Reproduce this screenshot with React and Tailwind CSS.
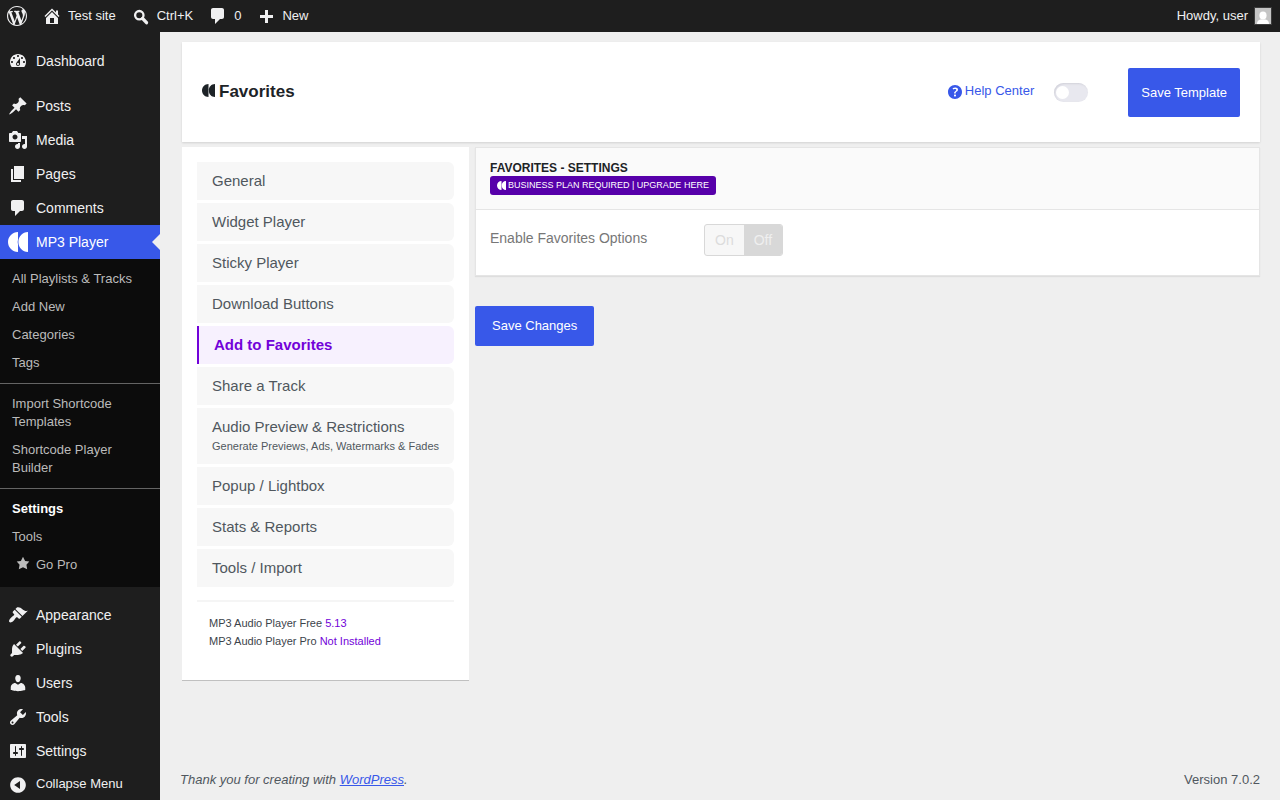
import React, { useState } from 'react';
import clsx from 'clsx';

const icons = {
  wordpress: 'M20 10c0-5.51-4.49-10-10-10C4.48 0 0 4.49 0 10c0 5.52 4.48 10 10 10 5.51 0 10-4.48 10-10zM7.78 15.37L4.37 6.22c.55-.02 1.17-.08 1.17-.08.5-.06.44-1.13-.06-1.11 0 0-1.45.11-2.37.11-.18 0-.37 0-.58-.01C4.12 2.69 6.87 1.11 10 1.11c2.33 0 4.45.87 6.05 2.34-.68-.11-1.65.39-1.65 1.58 0 .74.45 1.36.9 2.1.35.61.55 1.36.55 2.46 0 1.49-1.4 5-1.4 5l-3.03-8.37c.54-.02.82-.17.82-.17.5-.05.44-1.25-.06-1.22 0 0-1.44.12-2.38.12-.87 0-2.33-.12-2.33-.12-.5-.03-.56 1.2-.06 1.22l.92.08 1.26 3.41zM17.41 10c.24-.64.74-1.87.43-4.25.7 1.29 1.05 2.71 1.05 4.25 0 3.29-1.73 6.24-4.4 7.78.97-2.59 1.94-5.2 2.92-7.78zM6.1 18.09C3.12 16.65 1.11 13.53 1.11 10c0-1.3.23-2.48.72-3.59C3.25 10.3 4.67 14.2 6.1 18.09zm4.03-6.63l2.58 6.98c-.86.29-1.76.45-2.71.45-.79 0-1.57-.11-2.29-.33.81-2.38 1.62-4.74 2.42-7.1z',
  home: 'M16 8.5l1.53 1.53-1.06 1.06L10 4.6l-6.47 6.49-1.06-1.06L10 2.5l4 4v-2h2v4zm-6-2.46l6 5.99V18H4v-5.97zM12 17v-5H8v5h4z',
  plus: 'M17 9v3h-5v5H9v-5H4V9h5V4h3v5z',
  dashboard: 'M3.76 16h12.48c1.1-1.37 1.76-3.11 1.76-5 0-4.42-3.58-8-8-8s-8 3.58-8 8c0 1.89.66 3.63 1.76 5zM10 4c.55 0 1 .45 1 1s-.45 1-1 1-1-.45-1-1 .45-1 1-1zM6 6c.55 0 1 .45 1 1s-.45 1-1 1-1-.45-1-1 .45-1 1-1zm8 0c.55 0 1 .45 1 1s-.45 1-1 1-1-.45-1-1 .45-1 1-1zm-5.37 5.55L12 7v6c0 1.1-.9 2-2 2s-2-.9-2-2c0-.57.24-1.08.63-1.45zM4 10c.55 0 1 .45 1 1s-.45 1-1 1-1-.45-1-1 .45-1 1-1zm12 0c.55 0 1 .45 1 1s-.45 1-1 1-1-.45-1-1 .45-1 1-1zm-5 3c0-.55-.45-1-1-1s-1 .45-1 1 .45 1 1 1 1-.45 1-1z',
  post: 'M10.44 3.02l1.82-1.82 6.36 6.35-1.83 1.82c-1.05-.68-2.48-.57-3.41.36l-.75.75c-.92.93-1.04 2.35-.35 3.41l-1.83 1.82-2.41-2.41-2.8 2.79c-.42.42-3.38 2.71-3.8 2.29s1.86-3.39 2.28-3.81l2.79-2.79L4.1 9.36l1.83-1.82c1.05.69 2.48.57 3.4-.36l.75-.75c.93-.92 1.05-2.35.36-3.41z',
  media: 'M13 11V4c0-.55-.45-1-1-1h-1.67L9 1H5L3.67 3H2c-.55 0-1 .45-1 1v7c0 .55.45 1 1 1h10c.55 0 1-.45 1-1zM7 4.5c1.38 0 2.5 1.12 2.5 2.5S8.38 9.5 7 9.5 4.5 8.38 4.5 7 5.62 4.5 7 4.5zM14 6h5v10.5c0 1.38-1.12 2.5-2.5 2.5S14 17.88 14 16.5s1.12-2.5 2.5-2.5c.17 0 .34.02.5.05V9h-3V6zm-4 8.05V13h2v3.5c0 1.38-1.12 2.5-2.5 2.5S7 17.88 7 16.5 8.12 14 9.5 14c.17 0 .34.02.5.05z',
  page: 'M6 15V2h10v13H6zm-1 1h8v2H3V5h2v11z',
  comments: 'M5 2h9c1.1 0 2 .9 2 2v7c0 1.1-.9 2-2 2h-2l-5 5v-5H5c-1.1 0-2-.9-2-2V4c0-1.1.9-2 2-2z',
  appearance: 'M14.48 11.06L7.41 3.99l1.5-1.5c.5-.56 2.3-.47 3.51.32 1.21.8 1.43 1.28 2.91 2.1 1.18.64 2.45 1.26 4.45.85zm-.71.71L6.7 4.7 4.93 6.47c-.39.39-.39 1.02 0 1.41l1.06 1.06c.39.39.39 1.03 0 1.42-.6.6-1.43 1.11-2.21 1.69-.35.26-.7.53-1.01.84C1.43 14.23.4 16.08 1.4 17.07c.99 1 2.84-.03 4.18-1.36.31-.31.58-.66.85-1.02.57-.78 1.08-1.61 1.69-2.21.39-.39 1.02-.39 1.41 0l1.06 1.06c.39.39 1.02.39 1.41 0z',
  plugins: 'M13.11 4.36L9.87 7.6 8 5.73l3.24-3.24c.35-.34 1.05-.2 1.56.32.52.51.66 1.21.31 1.55zm-8 1.77l.91-1.12 9.01 9.01-1.19.84c-.71.71-2.63 1.16-3.82 1.16H6.14L4.9 17.26c-.59.59-1.54.59-2.12 0-.59-.58-.59-1.53 0-2.12l1.24-1.24v-3.88c0-1.13.4-3.19 1.09-3.89zm7.26 3.97l3.24-3.24c.34-.35 1.04-.21 1.55.31.52.51.66 1.21.31 1.55l-3.24 3.25z',
  users: 'M10 9.25c-2.27 0-2.73-3.44-2.73-3.44C7 4.02 7.82 2 9.97 2c2.16 0 2.98 2.02 2.71 3.81 0 0-.41 3.44-2.68 3.44zm0 2.57L12.72 10c2.39 0 4.52 2.33 4.52 4.53v2.49s-3.65 1.13-7.24 1.13c-3.65 0-7.24-1.13-7.24-1.13v-2.49c0-2.25 1.94-4.48 4.47-4.48z',
  tools: 'M16.68 9.77c-1.34 1.34-3.3 1.67-4.95.99l-5.41 6.52c-.99.99-2.59.99-3.58 0s-.99-2.59 0-3.57l6.52-5.42c-.68-1.65-.35-3.61.99-4.95 1.28-1.28 3.12-1.62 4.72-1.06l-2.89 2.89 2.82 2.82 2.86-2.87c.53 1.58.18 3.39-1.08 4.65zM3.81 16.21c.4.39 1.04.39 1.43 0 .4-.4.4-1.04 0-1.43-.39-.4-1.03-.4-1.43 0-.39.39-.39 1.03 0 1.43z',
  settings: 'M18 16V4c0-.55-.45-1-1-1H3c-.55 0-1 .45-1 1v12c0 .55.45 1 1 1h14c.55 0 1-.45 1-1zM8 11h1c.55 0 1 .45 1 1s-.45 1-1 1H8v1.5c0 .28-.22.5-.5.5s-.5-.22-.5-.5V13H6c-.55 0-1-.45-1-1s.45-1 1-1h1V5.5c0-.28.22-.5.5-.5s.5.22.5.5V11zm5-2h-1c-.55 0-1-.45-1-1s.45-1 1-1h1V5.5c0-.28.22-.5.5-.5s.5.22.5.5V7h1c.55 0 1 .45 1 1s-.45 1-1 1h-1v5.5c0 .28-.22.5-.5.5s-.5-.22-.5-.5V9z',
  collapse: 'M10 3.16c4.33 0 7.84 3.51 7.84 7.84s-3.51 7.84-7.84 7.84S2.16 15.33 2.16 11 5.71 3.16 10 3.16zm2 11.72V7.12L6.18 10.97z',
  star: 'M10 1l3 6 6 .75-4.12 4.62L16 19l-6-3-6 3 1.13-6.63L1 7.75 7 7z',
  help: 'M17 10c0-3.87-3.14-7-7-7-3.87 0-7 3.13-7 7s3.13 7 7 7c3.86 0 7-3.13 7-7zm-6.3 1.48H9.14v-.43c0-.38.08-.7.24-.98s.46-.57.88-.89c.41-.29.68-.53.81-.71.14-.18.2-.39.2-.62 0-.25-.09-.44-.28-.58-.19-.13-.45-.19-.79-.19-.58 0-1.25.15-2 .46l-.64-1.28c.87-.49 1.8-.74 2.77-.74.81 0 1.45.2 1.92.58.48.39.71.91.71 1.55 0 .43-.09.8-.29 1.11-.19.32-.57.67-1.11 1.06-.38.28-.61.49-.71.63-.1.15-.15.34-.15.57v.46zm-1.47 2.74c-.18-.17-.27-.42-.27-.73 0-.33.08-.58.26-.75s.43-.25.77-.25c.32 0 .57.09.75.26s.27.42.27.74c0 .3-.09.55-.27.72-.18.18-.43.27-.75.27-.33 0-.58-.09-.76-.26z',
  sonaar: 'M10 0v7.500Q9.300 10 10 12.500V20C4.500 20 0 15.500 0 10S4.500 0 10 0zM20 0v20c-5.500 0-9.600-4.500-9.600-10S14.500 0 20 0z',
};

const Icon = ({ name, className = 'w-5 h-5' }) => (
  <svg viewBox="0 0 20 20" fill="currentColor" aria-hidden="true" className={clsx('shrink-0', className)}>
    <path d={icons[name]} />
  </svg>
);

const SearchIcon = () => (
  <svg viewBox="0 0 20 20" fill="none" stroke="currentColor" aria-hidden="true" className="h-5 w-5 shrink-0">
    <circle cx="8.300" cy="9.200" r="4.200" strokeWidth="2.300" />
    <path d="M11.500 12.400l4 4.300" strokeWidth="3.300" strokeLinecap="round" />
  </svg>
);

const topMenu = [
  { icon: 'post', label: 'Posts' },
  { icon: 'media', label: 'Media' },
  { icon: 'page', label: 'Pages' },
  { icon: 'comments', label: 'Comments' },
];

const bottomMenu = [
  { icon: 'appearance', label: 'Appearance' },
  { icon: 'plugins', label: 'Plugins' },
  { icon: 'users', label: 'Users' },
  { icon: 'tools', label: 'Tools' },
  { icon: 'settings', label: 'Settings' },
];

// Groups are split by a thin rule
const submenu = [
  ['All Playlists & Tracks', 'Add New', 'Categories', 'Tags'],
  ['Import Shortcode Templates', 'Shortcode Player Builder'],
  ['Settings', 'Tools', 'Go Pro'],
];

const tabs = [
  { label: 'General' },
  { label: 'Widget Player' },
  { label: 'Sticky Player' },
  { label: 'Download Buttons' },
  { label: 'Add to Favorites' },
  { label: 'Share a Track' },
  { label: 'Audio Preview & Restrictions', hint: 'Generate Previews, Ads, Watermarks & Fades' },
  { label: 'Popup / Lightbox' },
  { label: 'Stats & Reports' },
  { label: 'Tools / Import' },
];

const AdminBar = () => (
  <header className="flex h-8 items-center justify-between bg-[#1e1e1e] pr-2 pl-[7px] text-[13px] text-[#f0f0f1]">
    <nav className="flex items-center gap-[15px]">
      <a href="#about" aria-label="About WordPress"><Icon name="wordpress" /></a>
      <a href="#site" className="flex items-center gap-1.5"><Icon name="home" />Test site</a>
      <a href="#search" className="flex items-center gap-1.5"><SearchIcon />Ctrl+K</a>
      <a href="#comments" className="flex items-center gap-1.5"><Icon name="comments" />0</a>
      <a href="#new" className="flex items-center gap-1.5"><Icon name="plus" />New</a>
    </nav>
    <a href="#profile" className="flex items-center gap-1.5">
      Howdy, user
      <svg viewBox="0 0 18 18" className="h-[18px] w-[18px]" aria-hidden="true">
        <rect width="18" height="18" fill="#3c3c3c" />
        <rect x="1" y="1" width="16" height="16" fill="#c5c5c5" />
        <ellipse cx="9" cy="8.600" rx="3.600" ry="4" fill="#fff" />
        <path d="M3 17c0-2.500 1.200-3.800 3.500-4.400h5c2.300.6 3.500 1.900 3.500 4.400z" fill="#fff" />
      </svg>
    </a>
  </header>
);

const MenuItem = ({ icon, label, active }) => (
  <li>
    <a
      href="#menu"
      className={clsx(
        'relative flex h-[34px] items-center gap-2 px-2 text-sm',
        active ? 'bg-[#3858e9] text-white' : 'text-[#f0f0f1] hover:bg-[#3858e9]'
      )}
    >
      <Icon name={icon} />
      {label}
      {active && (
        <span className="absolute top-1/2 right-0 -translate-y-1/2 border-8 border-l-0 border-transparent border-r-[#efefef]" />
      )}
    </a>
  </li>
);

const Sidebar = () => (
  <aside className="w-40 shrink-0 bg-[#1e1e1e] pt-3">
    <ul>
      <MenuItem icon="dashboard" label="Dashboard" />
      <li className="h-[11px]" />
      {topMenu.map((item) => <MenuItem key={item.label} {...item} />)}
      <MenuItem icon="sonaar" label="MP3 Player" active />
      <li className="mb-[11px] divide-y divide-[#646464] bg-[#0c0c0c] pb-0.5 text-[13px] leading-[18px] text-[#bbb]">
        {submenu.map((group, i) => (
          <ul key={i} className="py-1.5">
            {group.map((label) => (
              <li key={label}>
                <a
                  href="#submenu"
                  className={clsx('flex px-3 py-[5px] hover:text-white', label === 'Settings' && 'font-bold text-white')}
                >
                  {label === 'Go Pro' && <Icon name="star" className="mr-1.5 ml-1 h-3.5 w-3.5" />}
                  {label}
                </a>
              </li>
            ))}
          </ul>
        ))}
      </li>
      {bottomMenu.map((item) => <MenuItem key={item.label} {...item} />)}
      <li>
        <button className="flex h-8 w-full items-center gap-2 px-2 text-[13px] text-[#f0f0f1]">
          <Icon name="collapse" />
          Collapse Menu
        </button>
      </li>
    </ul>
  </aside>
);

const PageHeader = () => {
  const [enabled, setEnabled] = useState(false);

  return (
    <div className="flex min-h-[100px] items-center justify-between bg-white px-5 shadow-[0_1px_2px_rgba(0,0,0,0.12)]">
      <h1 className="flex items-baseline gap-1 text-[17px] font-bold text-[#1d2327]">
        <Icon name="sonaar" className="h-[13px] w-[13px]" />
        Favorites
      </h1>
      <div className="flex items-center">
        <a href="#help" className="flex items-start text-[13px] leading-[18px] text-[#3858e9]">
          <Icon name="help" />
          Help Center
        </a>
        <label className="ml-5 flex cursor-pointer">
          <input
            type="checkbox"
            aria-label="Enable template"
            checked={enabled}
            onChange={(e) => setEnabled(e.target.checked)}
            className="peer sr-only"
          />
          <span className="h-[19px] w-[34px] rounded-full bg-[#e8e8ef] px-0.5 py-[3px] shadow-[inset_1px_1px_2px_#d2d2da] peer-checked:bg-[#3858e9]">
            <span className="block h-[13px] w-[13px] rounded-full bg-white" />
          </span>
        </label>
        <button className="ml-10 rounded-xs bg-[#3858e9] px-[13px] py-[17px] text-[13px] leading-[15px] text-white">Save Template</button>
      </div>
    </div>
  );
};

const SettingsNav = ({ active, onSelect }) => (
  <div className="w-[287px] shrink-0 border-b border-[#c0c0c0] bg-white p-[15px] pb-[30px]">
    <nav className="flex flex-col gap-[3px]">
      {tabs.map(({ label, hint }) => (
        <a
          key={label}
          href="#tab"
          onClick={() => onSelect(label)}
          className={clsx(
            'block rounded-r-md px-[15px] py-[9px] text-[15px] leading-5',
            label === active
              ? 'border-l-2 border-[#7202d9] bg-[#f7f1fe] font-bold text-[#7202d9]'
              : 'bg-[#f7f7f7] text-[#50575e]'
          )}
        >
          {label}
          {hint && <span className="block text-[11px] leading-[18px] whitespace-nowrap">{hint}</span>}
        </a>
      ))}
    </nav>
    <div className="mt-[13px] border-t-2 border-[#f5f5f5] px-3 pt-3 text-[11px] leading-[18px] text-[#3c434a]">
      <p>MP3 Audio Player Free <span className="text-[#7202d9]">5.13</span></p>
      <p>MP3 Audio Player Pro <span className="text-[#7202d9]">Not Installed</span></p>
    </div>
  </div>
);

const FavoritesPanel = () => (
  <form className="flex-1" onSubmit={(e) => e.preventDefault()}>
    <section className="border border-[#e5e5e5] bg-white shadow-[0_1px_1px_rgba(0,0,0,0.07)]">
      <div className="border-b border-[#e5e5e5] bg-[#fafafa] px-3.5 pt-3 pb-3.5">
        <h2 className="text-xs font-bold text-[#1d2327]">FAVORITES - SETTINGS</h2>
        <a href="#upgrade" className="flex h-[19px] w-fit items-center gap-0.5 rounded-[3px] bg-[#5700aa] px-[7px] text-[9px] text-white">
          <Icon name="sonaar" className="h-[9px] w-[9px]" />
          BUSINESS PLAN REQUIRED | UPGRADE HERE
        </a>
      </div>
      <div className="flex items-start px-3.5 pt-3.5 pb-[19px]">
        <label htmlFor="enable-favorites" className="w-[214px] pt-1 text-sm text-[#777]">Enable Favorites Options</label>
        <label className="flex h-8 items-center overflow-hidden rounded-[3px] border border-[#d8d8d8] bg-[#f7f7f7] text-sm">
          <input id="enable-favorites" type="checkbox" disabled className="sr-only" />
          <span className="px-2.5 text-[#dcdcdc]">On</span>
          <span className="bg-[#d8d8d8] px-2.5 py-1.5 text-[#efefef]">Off</span>
        </label>
      </div>
    </section>
    <button type="submit" className="mt-[30px] h-10 rounded-xs bg-[#3858e9] px-[17px] text-[13px] text-white">
      Save Changes
    </button>
  </form>
);

const App = () => {
  const [activeTab, setActiveTab] = useState('Add to Favorites');

  return (
    <div className="flex min-h-screen flex-col bg-[#efefef] font-['Liberation_Sans',sans-serif]">
      <AdminBar />
      <div className="flex flex-1">
        <Sidebar />
        <div className="flex min-w-0 flex-1 flex-col px-5 pt-2.5">
          <main className="flex-1 pl-0.5">
            <PageHeader />
            <div className="mt-[5px] flex items-start gap-1.5">
              <SettingsNav active={activeTab} onSelect={setActiveTab} />
              <FavoritesPanel />
            </div>
          </main>
          <footer className="flex items-center justify-between pb-2.5 text-[13px] leading-5 text-[#50575e]">
            <p className="italic">
              Thank you for creating with <a href="#wordpress" className="text-[#3858e9] underline">WordPress</a>.
            </p>
            <p>Version 7.0.2</p>
          </footer>
        </div>
      </div>
    </div>
  );
};

export default App;
